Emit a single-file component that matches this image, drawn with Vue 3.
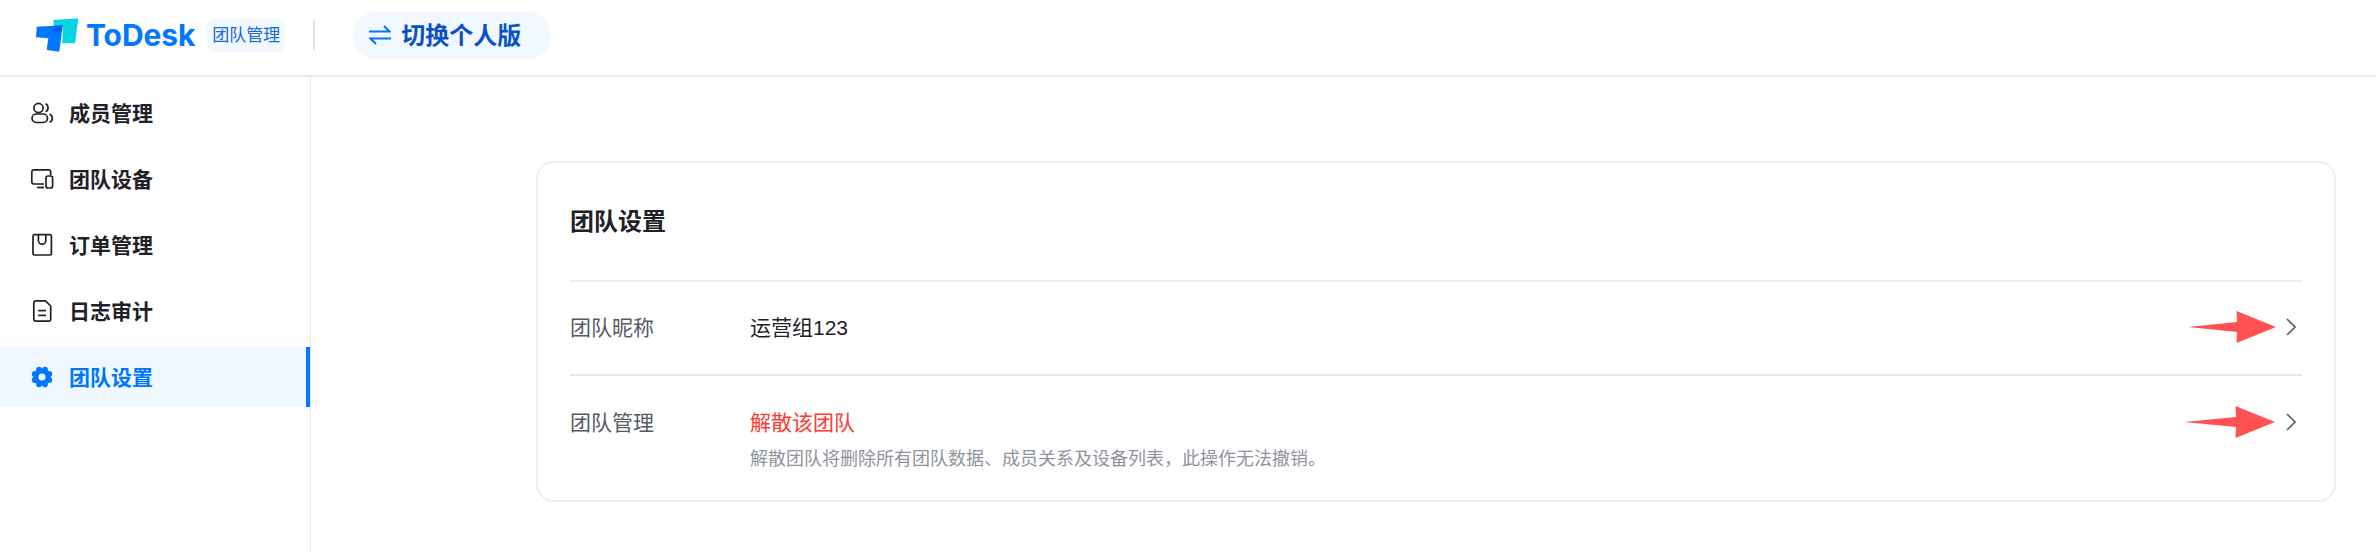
<template>
  <div class="page">
    <header class="topbar">
      <svg class="logo" width="43" height="35" viewBox="0 0 43 35">
        <path d="M17.3 2 L42.3 0.3 L39 25.3 L26.3 25.3 L27 7.7 L18 8 Z" fill="#05d5e0" />
        <path d="M0.7 8.7 L26.7 7.3 L23.3 33.7 L10.7 32 L12.3 20.3 L0 19.3 Z" fill="#0077ff" />
        <path d="M17.7 7.7 L26.6 7.3 L25.8 13.7 L16.8 13.7 Z" fill="#0062ee" />
      </svg>
      <span class="brand">ToDesk</span>
      <span class="tag">团队管理</span>
      <span class="divider"></span>
      <button class="switch">
        <svg width="22" height="20" viewBox="0 0 22 20" fill="none" stroke="#0077ff" stroke-width="2">
          <path d="M0 6.5 H20.5 L15 1" />
          <path d="M22 13.5 H1.5 L7 19" />
        </svg>
        <span class="switch-text">切换个人版</span>
      </button>
    </header>

    <div class="body">
      <aside class="sidebar">
        <div v-for="item in menu" :key="item.name" class="item" :class="{ active: item.active }">
          <svg class="icon" width="24" height="24" viewBox="0 0 24 24" fill="none" stroke="currentColor" stroke-width="1.7" v-html="item.icon"></svg>
          <span class="item-text">{{ item.name }}</span>
        </div>
      </aside>

      <main class="content">
        <section class="card">
          <h2 class="title">团队设置</h2>
          <div class="row first">
            <span class="label">团队昵称</span>
            <div class="value">运营组123</div>
            <svg class="chevron" width="10" height="18" viewBox="0 0 10 18" fill="none" stroke="#555a66" stroke-width="1.6"><path d="M1 1 L9 9 L1 17" /></svg>
            <svg class="mark" width="90" height="32" viewBox="0 0 90 32"><path d="M0 16 L49 11 L48.5 0 L88 16 L48.5 32 L49 21 Z" fill="#ff5252" /></svg>
          </div>
          <div class="row second">
            <span class="label">团队管理</span>
            <div class="value">
              <div class="danger">解散该团队</div>
              <div class="desc">解散团队将删除所有团队数据、成员关系及设备列表，此操作无法撤销。</div>
            </div>
            <svg class="chevron" width="10" height="18" viewBox="0 0 10 18" fill="none" stroke="#555a66" stroke-width="1.6"><path d="M1 1 L9 9 L1 17" /></svg>
            <svg class="mark" width="92" height="32" viewBox="0 0 92 32"><path d="M0 16 L52 11 L51.5 0 L91 16 L51.5 32 L52 21 Z" fill="#ff5252" /></svg>
          </div>
        </section>
      </main>
    </div>
  </div>
</template>

<script setup>
const lobes = [0, 45, 90, 135, 180, 225, 270, 315]
  .map(a => {
    const r = (a + 22.5) * Math.PI / 180
    return `<circle cx="${(11 + 7.9 * Math.cos(r)).toFixed(2)}" cy="${(12 + 7.9 * Math.sin(r)).toFixed(2)}" r="2.9" fill="currentColor" stroke="none" />`
  })
  .join('')

const menu = [
  {
    name: '成员管理',
    icon: '<circle cx="7.5" cy="7" r="4.6" /><rect x="1" y="13" width="15.5" height="8.5" rx="4.25" /><path d="M14.5 2.8 a4.4 4.4 0 0 1 0 8" /><path d="M18.6 13.2 a4.3 4.3 0 0 1 0 8" />'
  },
  {
    name: '团队设备',
    icon: '<path d="M13 17 H3 a2.2 2.2 0 0 1 -2.2 -2.2 V5 a2.2 2.2 0 0 1 2.2 -2.2 H17.5 a2.2 2.2 0 0 1 2.2 2.2 V8" /><path d="M6 20.5 H13" /><rect x="15" y="9" width="6.6" height="12" rx="2" />'
  },
  {
    name: '订单管理',
    icon: '<rect x="2" y="1.6" width="18.4" height="20.4" rx="1.8" /><path d="M7.4 2 V7.5 a3.7 3.7 0 0 0 7.4 0 V2" />'
  },
  {
    name: '日志审计',
    icon: '<path d="M14.5 1.8 H5 a2.2 2.2 0 0 0 -2.2 2.2 V20 a2.2 2.2 0 0 0 2.2 2.2 H17.5 a2.2 2.2 0 0 0 2.2 -2.2 V7 Z" /><path d="M7.2 11.6 H15" /><path d="M7.2 16.4 H15" />'
  },
  {
    name: '团队设置',
    active: true,
    icon: `<circle cx="11" cy="12" r="6" stroke="currentColor" stroke-width="5" />${lobes}`
  }
]
</script>

<style scoped>
.page {
  width: 2376px;
  height: 552px;
  background: #fff;
  overflow: hidden;
  font-family: "Liberation Sans", "Noto Sans CJK SC", sans-serif;
  color: #1f2129;
}

.topbar {
  height: 70px;
  border-bottom: 2px solid #e8e8ec;
  display: flex;
  align-items: center;
  padding: 0 0 5px 36px;
}

.logo {
  flex: none;
}

.brand {
  margin-left: 7px;
  font-family: Inter, "Liberation Sans", sans-serif;
  font-size: 30px;
  font-weight: 700;
  letter-spacing: -0.1px;
  color: #0077ff;
}

.tag {
  margin-left: 12px;
  width: 78px;
  text-align: center;
  height: 33px;
  line-height: 33px;
  border-radius: 8px;
  background: #f2f8ff;
  color: #1668dc;
  font-size: 17px;
}

.divider {
  width: 2px;
  height: 30px;
  margin-left: 28px;
  background: #e2e2e8;
}

.switch {
  margin-left: 38px;
  height: 47px;
  width: 198px;
  padding: 0 0 0 16px;
  border: none;
  border-radius: 24px;
  background: #f1f8ff;
  display: flex;
  align-items: center;
  gap: 10px;
  font-family: inherit;
  font-size: 24px;
  font-weight: 700;
  color: #0a50c8;
}

.switch-text {
  padding-bottom: 3px;
}

.body {
  display: flex;
  height: 475px;
}

.sidebar {
  width: 311px;
  flex: none;
  box-sizing: border-box;
  border-right: 1px solid #e8e8ec;
  padding-top: 6px;
  display: flex;
  flex-direction: column;
  gap: 6px;
}

.item {
  height: 60px;
  display: flex;
  align-items: center;
  gap: 14px;
  padding-left: 31px;
  font-size: 21px;
  font-weight: 700;
}

.item-text {
  padding-bottom: 2px;
}

.icon {
  flex: none;
}

.item.active {
  background: #f1f7ff;
  color: #0077ff;
  border-right: 4px solid #0077ff;
}

.content {
  flex: 1;
  padding: 84px 40px 0 225px;
}

.card {
  box-sizing: border-box;
  height: 341px;
  border: 2px solid #efeff2;
  border-radius: 18px;
  padding: 0 32px;
}

.title {
  margin: 0;
  box-sizing: border-box;
  height: 117px;
  padding-bottom: 4px;
  display: flex;
  align-items: center;
  font-size: 24px;
  font-weight: 700;
}

.row {
  position: relative;
  display: flex;
  align-items: flex-start;
  font-size: 21px;
  line-height: 28px;
}

.row.first {
  box-sizing: border-box;
  height: 94px;
  border-top: 2px solid #efeff2;
  padding-top: 32px;
}

.row.second {
  border-top: 2px solid #e6e6ec;
  padding-top: 33px;
}

.label {
  width: 180px;
  flex: none;
  color: #555a66;
}

.value {
  flex: 1;
}

.danger {
  color: #ff3b30;
}

.desc {
  margin-top: 10px;
  font-size: 18px;
  line-height: 24px;
  color: #8f939c;
}

.chevron {
  flex: none;
  margin: 4px 6px 0 0;
}

.mark {
  position: absolute;
  top: 29px;
  right: 24px;
}

.second .mark {
  top: 30px;
  right: 26px;
}
</style>

<style>
html,
body {
  margin: 0;
  background: #fff;
}
</style>
